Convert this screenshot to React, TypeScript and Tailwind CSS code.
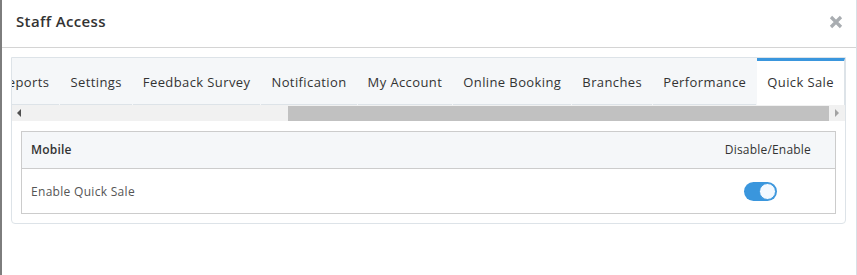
import React from "react";

const tabs = [
  "Reports",
  "Settings",
  "Feedback Survey",
  "Notification",
  "My Account",
  "Online Booking",
  "Branches",
  "Performance",
];

export default function App() {
  return (
    <div
      className="w-[857px] h-[275px] bg-white flex overflow-hidden text-[#333]"
      style={{ fontFamily: "'Open Sans', Lato, sans-serif" }}
    >
      <div className="w-[2px] bg-[#7d7d7d] shrink-0" />
      <div className="flex-1 flex flex-col border-r border-[#d8e0e6] min-w-0">
        <div className="h-[48px] border-b border-[#d4d4d4] flex items-center justify-between pl-[14px] pr-[13px] shrink-0">
          <span className="text-[15px] font-semibold text-[#333] tracking-[0.35px] mb-[4px]">Staff Access</span>
          <svg width="14" height="14" viewBox="0 0 14 14" className="mb-[3px]">
            <path d="M2 2 L12 12 M12 2 L2 12" stroke="#a9adb1" strokeWidth="3.2" strokeLinecap="butt" />
          </svg>
        </div>
        <div className="pl-[9px] pr-[10px] pt-[9px]">
          <div className="border border-[#dde3e8] rounded-b-[4px]">
            <div className="flex justify-end bg-[#f5f7f9] h-[47px] overflow-hidden">
              <div className="flex shrink-0">
                {tabs.map((t) => (
                  <div
                    key={t}
                    className="h-full flex items-center px-[10px] mr-[1px] border-b border-[#dde3e8] text-[13px] tracking-[0.4px] whitespace-nowrap pt-[3px]"
                  >
                    {t}
                  </div>
                ))}
                <div className="h-full flex items-center px-[10px] bg-white border-t-[3px] border-[#3a96dd] border-r border-r-[#dde3e8] text-[13px] tracking-[0.4px] whitespace-nowrap">
                  <span>Quick Sale</span>
                </div>
              </div>
            </div>
            <div className="h-[16px] bg-[#f1f1f1] flex items-center">
              <div className="w-[14px] flex items-center justify-center">
                <div className="w-0 h-0 border-y-[4px] border-y-transparent border-r-[4px] border-r-[#505050]" />
              </div>
              <div className="flex-1 h-[15px] relative">
                <div className="absolute top-0 bottom-0 left-[262px] right-0 bg-[#c1c1c1]" />
              </div>
              <div className="w-[16px] flex items-center justify-center">
                <div className="w-0 h-0 border-y-[4px] border-y-transparent border-l-[4px] border-l-[#a3a3a3]" />
              </div>
            </div>
            <div className="pt-[10px] px-[9px] pb-[9px]">
              <div className="border border-[#cccccc]">
                <div className="h-[37px] bg-[#f5f7f9] border-b border-[#cccccc] flex items-center justify-between px-[9px] text-[12px] tracking-[0.2px]">
                  <span className="font-semibold">Mobile</span>
                  <span className="mr-[15px]">Disable/Enable</span>
                </div>
                <div className="h-[44px] flex items-center justify-between px-[9px] text-[12px] text-[#555] tracking-[0.3px]">
                  <span className="mt-[2px]">Enable Quick Sale</span>
                  <div className="mr-[49px] w-[33px] h-[19px] rounded-full bg-[#3a96dd] relative">
                    <div className="absolute right-[1px] top-[1px] w-[17px] h-[17px] rounded-full bg-[#f3f9ff] border border-[#3a96dd]" />
                  </div>
                </div>
              </div>
            </div>
          </div>
        </div>
      </div>
    </div>
  );
}
